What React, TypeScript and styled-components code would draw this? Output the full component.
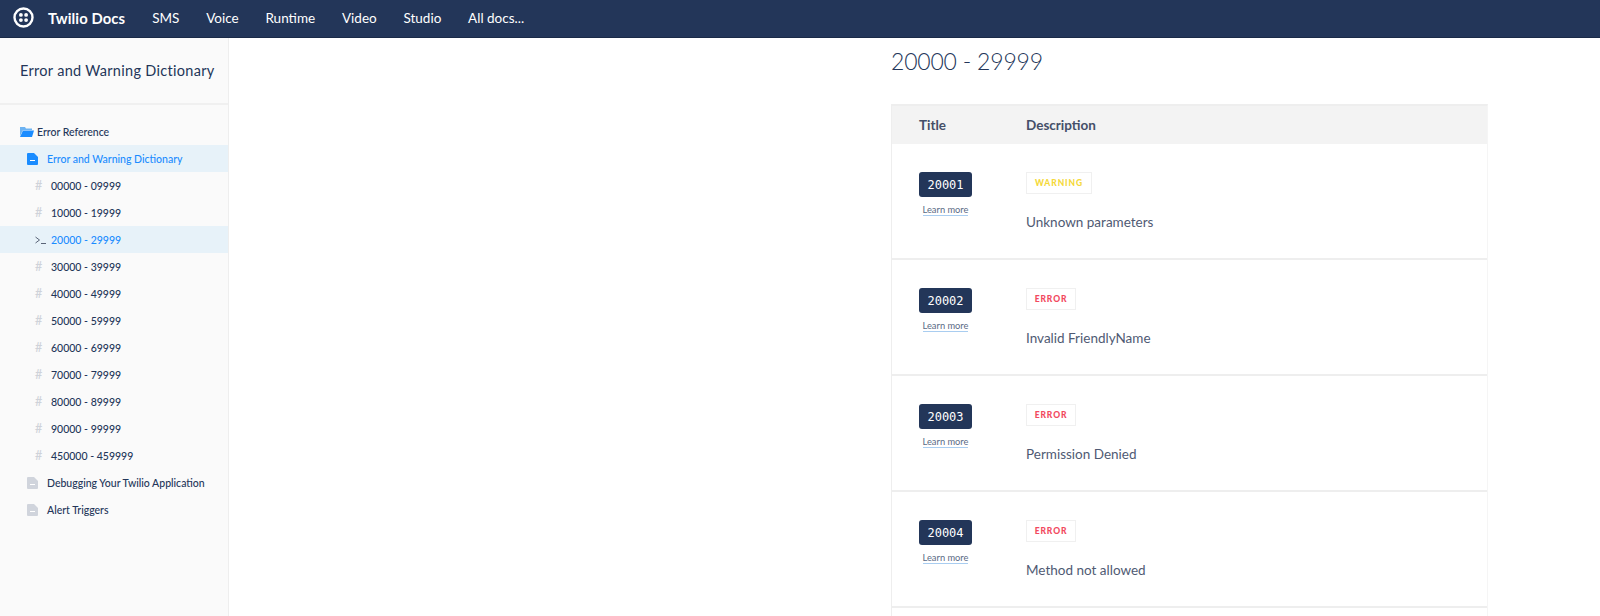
import React from "react";
import styled, { createGlobalStyle } from "styled-components";

const GlobalStyle = createGlobalStyle`
  html, body {
    margin: 0;
    padding: 0;
    background: #fff;
    overflow: hidden;
  }
  body {
    font-family: Lato, "Open Sans", sans-serif;
    color: #233659;
  }
`;

const Page = styled.div`
  width: 1600px;
  height: 616px;
  display: flex;
  flex-direction: column;
  overflow: hidden;
`;

const TopBar = styled.header`
  flex: none;
  height: 35px;
  padding: 0 0 2px 13px;
  background: #233659;
  border-bottom: 1px solid #1a2a47;
  display: flex;
  align-items: center;
  color: #fff;
`;

const LogoMark = styled.svg`
  width: 21px;
  height: 21px;
  margin-right: 14px;
`;

const Brand = styled.span`
  font-size: 14.8px;
  font-weight: 700;
  margin-right: 27px;
  letter-spacing: 0.1px;
`;

const TopLink = styled.a`
  font-size: 13.5px;
  margin-right: 26.8px;
  color: #fff;
`;

const Body = styled.div`
  flex: 1;
  display: flex;
  min-height: 0;
`;

const Sidebar = styled.aside`
  flex: none;
  width: 228px;
  background: #fafafa;
  border-right: 1px solid #eeeeee;
`;

const SideTitle = styled.div`
  height: 65px;
  border-bottom: 2px solid #f0f0f0;
  padding-left: 20px;
  display: flex;
  align-items: center;
  font-size: 14.5px;
  letter-spacing: 0.3px;
  margin-bottom: 13px;
`;

const NavRow = styled.div<{ $active?: boolean; $indent: number }>`
  height: 27px;
  display: flex;
  align-items: center;
  padding-left: ${(p) => p.$indent}px;
  font-size: 10.5px;
  font-weight: 500;
  background: ${(p) => (p.$active ? "#e7f2f9" : "transparent")};
  color: ${(p) => (p.$active ? "#1a8cff" : "#233659")};
`;

const NavIcon = styled.svg<{ $gap: number }>`
  flex: none;
  width: 11px;
  height: 12px;
  margin-right: ${(p) => p.$gap}px;
`;

const FolderIcon = styled(NavIcon)`
  width: 14px;
  height: 11px;
`;

const Hash = styled.span`
  flex: none;
  width: 16px;
  font-size: 12.5px;
  color: #cfd2d9;
`;

const Main = styled.main`
  flex: 1;
  padding-left: 662px;
  min-width: 0;
`;

const Heading = styled.h2`
  margin: 10px 0 30px;
  font-size: 23px;
  font-weight: 300;
  line-height: 26px;
  letter-spacing: -0.2px;
  color: #233659;
`;

const Table = styled.div`
  width: 597px;
  box-sizing: border-box;
  border-left: 1px solid #eeeeee;
  border-right: 1px solid #f5f5f5;
  border-top: 2px solid #eeeeee;
`;

const Row = styled.div<{ $head?: boolean }>`
  display: grid;
  grid-template-columns: 107px 1fr;
  padding-left: 27px;
  box-sizing: border-box;
  height: ${(p) => (p.$head ? "38px" : "116px")};
  align-items: ${(p) => (p.$head ? "center" : "start")};
  background: ${(p) => (p.$head ? "#f3f3f3" : "#fff")};
  border-bottom: ${(p) => (p.$head ? "none" : "2px solid #eeeeee")};
`;

const HeadCell = styled.div`
  font-size: 13.5px;
  font-weight: 700;
  color: #444f68;
`;

const CodeCell = styled.div`
  padding-top: 28px;
  width: 53px;
  display: flex;
  flex-direction: column;
  align-items: center;
`;

const Code = styled.div`
  width: 53px;
  height: 25px;
  border-radius: 3px;
  background: #233659;
  color: #fff;
  font-family: "DejaVu Sans Mono", "Liberation Mono", monospace;
  font-size: 12px;
  font-weight: 500;
  display: flex;
  align-items: center;
  justify-content: center;
`;

const LearnMore = styled.a`
  margin-top: 7px;
  font-size: 9.3px;
  line-height: 11px;
  color: #5a6a85;
  border-bottom: 1px solid #a9cdf0;
`;

const DescCell = styled.div`
  padding-top: 26px;
`;

const Badge = styled.span<{ $kind: "warning" | "error" }>`
  display: inline-flex;
  align-items: center;
  justify-content: center;
  box-sizing: border-box;
  height: 22px;
  width: ${(p) => (p.$kind === "warning" ? "66px" : "50px")};
  border: 1px solid #f0f0f0;
  font-size: 8.5px;
  font-weight: 900;
  letter-spacing: 0.9px;
  color: ${(p) => (p.$kind === "warning" ? "#f5d93b" : "#f2495e")};
`;

const Message = styled.div`
  margin-top: 19px;
  font-size: 13.5px;
  line-height: 18px;
  color: #4f5a73;
`;

const PageIcon = ({ color, gap }: { color: string; gap: number }) => (
  <NavIcon viewBox="0 0 11 12" $gap={gap}>
    <path d="M1 0h6l4 4v7a1 1 0 0 1-1 1H1a1 1 0 0 1-1-1V1a1 1 0 0 1 1-1z" fill={color} />
    <path d="M3 7h5v1H3z" fill="#fff" />
  </NavIcon>
);

const links = ["SMS", "Voice", "Runtime", "Video", "Studio", "All docs..."];
const ranges = [
  "00000 - 09999",
  "10000 - 19999",
  "20000 - 29999",
  "30000 - 39999",
  "40000 - 49999",
  "50000 - 59999",
  "60000 - 69999",
  "70000 - 79999",
  "80000 - 89999",
  "90000 - 99999",
  "450000 - 459999",
];
const errors: { code: string; kind: "warning" | "error"; message: string }[] = [
  { code: "20001", kind: "warning", message: "Unknown parameters" },
  { code: "20002", kind: "error", message: "Invalid FriendlyName" },
  { code: "20003", kind: "error", message: "Permission Denied" },
  { code: "20004", kind: "error", message: "Method not allowed" },
];

export default function App() {
  return (
    <Page>
      <GlobalStyle />
      <TopBar>
        <LogoMark viewBox="0 0 21 21">
          <circle cx="10.5" cy="10.5" r="9" fill="none" stroke="#fff" strokeWidth="2.4" />
          <circle cx="7.9" cy="7.9" r="1.9" fill="#fff" />
          <circle cx="13.1" cy="7.9" r="1.9" fill="#fff" />
          <circle cx="7.9" cy="13.1" r="1.9" fill="#fff" />
          <circle cx="13.1" cy="13.1" r="1.9" fill="#fff" />
        </LogoMark>
        <Brand>Twilio Docs</Brand>
        {links.map((l) => (
          <TopLink key={l}>{l}</TopLink>
        ))}
      </TopBar>
      <Body>
        <Sidebar>
          <SideTitle>Error and Warning Dictionary</SideTitle>
          <NavRow $indent={20}>
            <FolderIcon viewBox="0 0 14 11" $gap={3}>
              <path d="M0 1h5l1 1.5h6V4H3L0 10z" fill="#6db3f2" />
              <path d="M3 4.5h11L12 11H0z" fill="#1a8cff" />
            </FolderIcon>
            Error Reference
          </NavRow>
          <NavRow $indent={27} $active>
            <PageIcon color="#1a8cff" gap={9} />
            Error and Warning Dictionary
          </NavRow>
          {ranges.map((r) => {
            const active = r === "20000 - 29999";
            return (
              <NavRow key={r} $indent={35} $active={active}>
                {active ? (
                  <NavIcon viewBox="0 0 11 12" $gap={5}>
                    <path d="M0.5 3l4 3-4 3" fill="none" stroke="#5a6478" strokeWidth="1" />
                    <path d="M6 9.5h5" stroke="#5a6478" strokeWidth="1" />
                  </NavIcon>
                ) : (
                  <Hash>#</Hash>
                )}
                {r}
              </NavRow>
            );
          })}
          <NavRow $indent={27}>
            <PageIcon color="#d0d4dc" gap={9} />
            Debugging Your Twilio Application
          </NavRow>
          <NavRow $indent={27}>
            <PageIcon color="#d0d4dc" gap={9} />
            Alert Triggers
          </NavRow>
        </Sidebar>
        <Main>
          <Heading>20000 - 29999</Heading>
          <Table>
            <Row $head>
              <HeadCell>Title</HeadCell>
              <HeadCell>Description</HeadCell>
            </Row>
            {errors.map((e) => (
              <Row key={e.code}>
                <CodeCell>
                  <Code>{e.code}</Code>
                  <LearnMore>Learn more</LearnMore>
                </CodeCell>
                <DescCell>
                  <Badge $kind={e.kind}>{e.kind.toUpperCase()}</Badge>
                  <Message>{e.message}</Message>
                </DescCell>
              </Row>
            ))}
            <Row />
          </Table>
        </Main>
      </Body>
    </Page>
  );
}
